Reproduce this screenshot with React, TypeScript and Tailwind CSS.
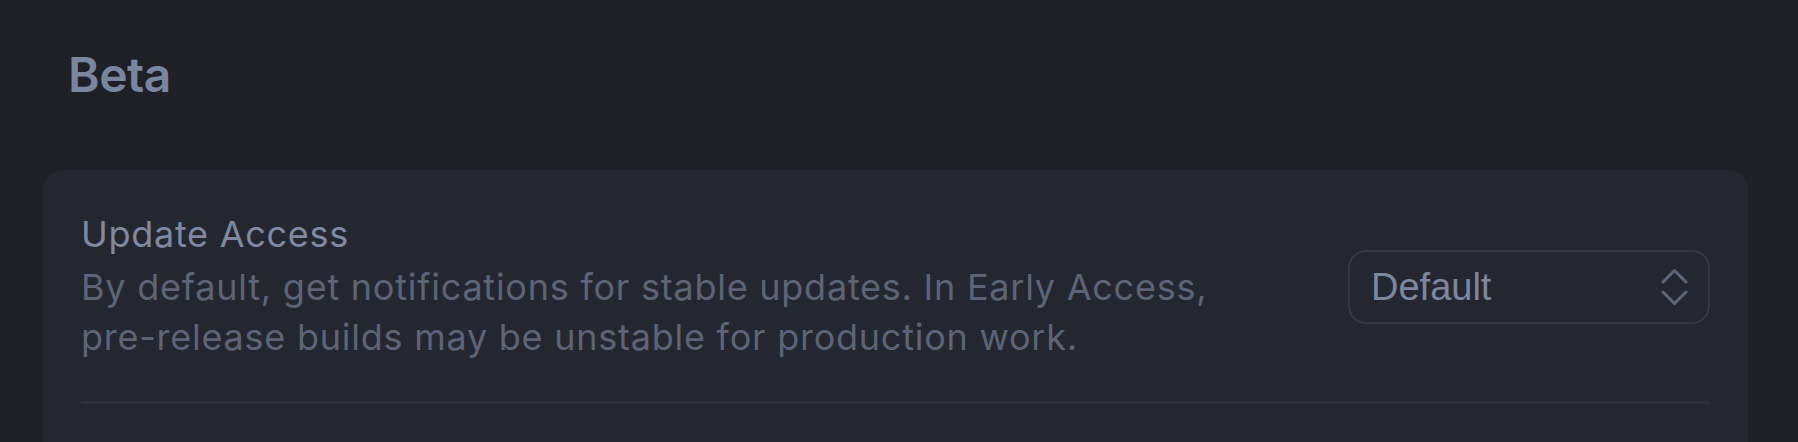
function Chevrons() {
  return (
    <svg width="27" height="38" viewBox="-1 -1 27 38" fill="none" className="shrink-0">
      <path d="M1 13 L12.5 1.5 L24 13" stroke="#5f6678" strokeWidth="3" strokeLinecap="round" strokeLinejoin="round" />
      <path d="M1 23 L12.5 34.5 L24 23" stroke="#5f6678" strokeWidth="3" strokeLinecap="round" strokeLinejoin="round" />
    </svg>
  )
}

export default function App() {
  return (
    <div className="h-[442px] w-full overflow-hidden bg-[#1f2025] pl-[43px] pr-[50px] pt-[46px] font-['Inter','Liberation_Sans',sans-serif]">
      <h1 className="ml-[25px] text-[48px] leading-[58px] font-semibold tracking-[-0.01em] text-[#7a85a0]">Beta</h1>

      <div className="mt-[66px] rounded-[20px] bg-[#252730] px-[38px] pt-[42px] pb-[80px]">
        <div className="flex items-center justify-between">
          <div>
            <div className="text-[36px] leading-[44px] text-[#8089a0] tracking-[0.02em]">Update Access</div>
            <p className="mt-[6px] text-[36px] leading-[50px] tracking-[0.021em] text-[#5d6475]">
              By default, get notifications for stable updates. In Early Access,
              <br />
              pre-release builds may be unstable for production work.
            </p>
          </div>

          <button className="flex h-[74px] w-[362px] items-center justify-between rounded-[18px] border-2 border-[#363944] pl-[21px] pr-[20px]">
            <span className="font-['Liberation_Sans','Arial',sans-serif] text-[38px] font-medium text-[#7d879e]">Default</span>
            <Chevrons />
          </button>
        </div>

        <div className="mt-[39px] h-[3px] bg-[#2c2f38]" />
      </div>
    </div>
  )
}
